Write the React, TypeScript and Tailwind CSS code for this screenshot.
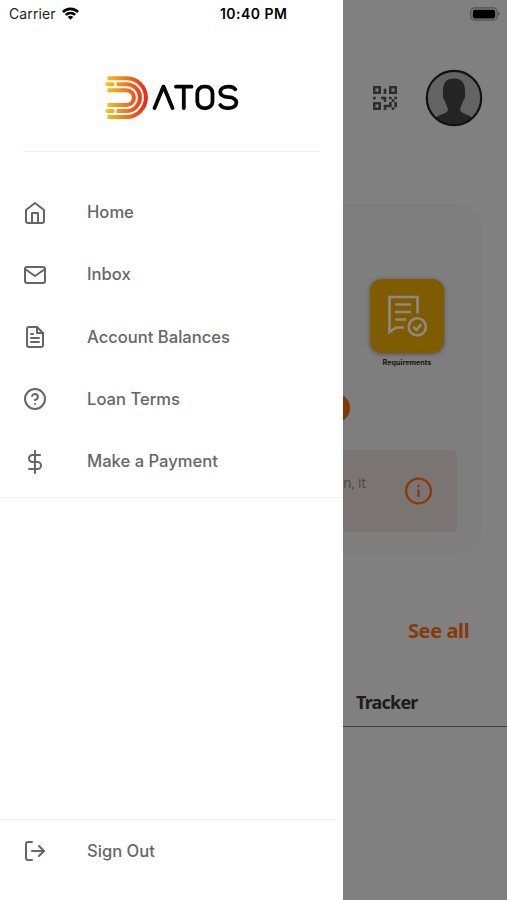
import type { IconType } from "react-icons";
import { FiDollarSign, FiFileText, FiHelpCircle, FiHome, FiLogOut, FiMail } from "react-icons/fi";

interface MenuItemProps {
  label: string;
  icon: IconType;
}

const menuItems: MenuItemProps[] = [
  { label: "Home", icon: FiHome },
  { label: "Inbox", icon: FiMail },
  { label: "Account Balances", icon: FiFileText },
  { label: "Loan Terms", icon: FiHelpCircle },
  { label: "Make a Payment", icon: FiDollarSign },
];

const MenuItem = ({ label, icon: Icon }: MenuItemProps) => (
  <a className="flex h-[62.3px] items-center pl-[23px] text-[#666]">
    <Icon className="size-6" strokeWidth={2} />
    <span className="ml-10 whitespace-nowrap text-[16.6px] font-medium">{label}</span>
  </a>
);

const Logo = () => (
  <svg className="h-[46px] w-[138px]" viewBox="103.5 74 138 46" fill="none">
    <defs>
      <linearGradient id="flame" x1="106" y1="0" x2="148" y2="0" gradientUnits="userSpaceOnUse">
        <stop offset="0" stopColor="#f2c81b" />
        <stop offset="0.5" stopColor="#ef7620" />
        <stop offset="1" stopColor="#e82618" />
      </linearGradient>
    </defs>
    <g stroke="url(#flame)" strokeWidth="4">
      <path d="M108 78.2H127A19.4 19.4 0 0 1 127 117H108" />
      <path d="M117 84.2H127A13.4 13.4 0 0 1 127 111H117" />
      <path d="M108 90.2H127A7.4 7.4 0 0 1 127 105H108" />
      <path d="M107.8 84.2H113M107.8 111H113" strokeLinecap="round" />
    </g>
    <g stroke="#050505" strokeWidth="3.8" strokeLinecap="round" strokeLinejoin="round">
      <path d="M155 108.1L163.8 86.7H164.2L173 108.1" />
      <path d="M176.5 86.7H192M184.3 87V108.1" />
      <rect x="197.8" y="86.7" width="15.2" height="21.4" rx="6.5" />
      <path d="M235.8 89.3C234.5 87.5 232 86.7 229 86.7C218 86.7 218 97.2 228.8 97.2C239.8 97.2 239.4 108.1 228.6 108.1C225 108.1 222.3 107.2 220.8 105" />
    </g>
  </svg>
);

const WifiIcon = () => (
  <svg className="ml-[5px] h-[15px] w-[19px]" viewBox="0 0 19 15">
    <path d="M1 5A12 12 0 0 1 18 5L16.2 6.9A9.5 9.5 0 0 0 2.8 6.9Z" />
    <path d="M3.9 8A8 8 0 0 1 15.1 8L13.3 9.8A5.5 5.5 0 0 0 5.7 9.8Z" />
    <path d="M6.8 10.9A4 4 0 0 1 12.2 10.9L9.5 13.7Z" />
  </svg>
);

const BatteryIcon = () => (
  <svg className="h-[14px] w-[30px]" viewBox="0 0 30 14">
    <rect x="0.8" y="0.8" width="26.4" height="12.4" rx="3.8" fill="none" stroke="#505050" strokeWidth="1.2" />
    <rect x="2.8" y="2.7" width="22.4" height="8.8" rx="2" />
    <path d="M28.3 5V9Q30 8 30 7T28.3 5" fill="#505050" />
  </svg>
);

const QrIcon = () => (
  <svg className="size-6" viewBox="0 0 24 24" fill="#2d2d2d">
    <path fillRule="evenodd" d="M0 0H8V8H0ZM2.5 2.5V5.5H5.5V2.5ZM16 0H24V8H16ZM18.5 2.5V5.5H21.5V2.5ZM0 16H8V24H0ZM2.5 18.5V21.5H5.5V18.5Z" />
    <path d="M10.7 2.7H13.3V8H10.7ZM0 10.7H2.7V13.3H0ZM8 10.7H13.3V16H10.7V13.3H8ZM16 10.7H18.7V13.3H16ZM21.3 10.7H24V13.3H21.3ZM18.7 13.3H21.3V16H18.7ZM16 16H18.7V21.3H13.3V24H10.7V18.7H16ZM21.3 16H24V21.3H21.3ZM18.7 21.3H21.3V24H18.7Z" />
  </svg>
);

const Avatar = () => (
  <svg className="size-[58px]" viewBox="0 0 58 58">
    <defs>
      <clipPath id="avatar-clip">
        <circle cx="29" cy="29" r="27" />
      </clipPath>
    </defs>
    <circle cx="29" cy="29" r="27.5" fill="#636363" />
    <path clipPath="url(#avatar-clip)" fill="#242424" d="M29 9.5C21 9.5 17.5 14.5 18 24C17.5 27 18.3 31 20 32C21 36 23 38 23 41C22 45 14 45 10 49.5V58H48V49.5C44 45 36 45 35 41C35 38 37 36 38 32C39.7 31 40.5 27 40 24C40.5 14.5 37 9.5 29 9.5Z" />
    <circle cx="29" cy="29" r="27.2" fill="none" stroke="#121212" strokeWidth="2.2" />
  </svg>
);

const RequirementsIcon = () => (
  <svg className="size-[74px]" viewBox="0 0 74 74" fill="none" stroke="#8c8985" strokeWidth="2.6">
    <path d="M34 48.5H26L19.5 53V18H47.5V34.5" />
    <path d="M25 25.5H41M25 33H41M25 40.5H36" />
    <circle cx="47.3" cy="47.8" r="8.6" />
    <path d="M43.2 47.8L46.3 50.8L51.3 45.3" />
  </svg>
);

const StatusBar = () => (
  <div className="absolute inset-x-0 top-0 flex h-[27px] items-center text-black">
    <span className="w-[52px] pl-[9px] text-[14px] tracking-[0.1px] text-[#222]">Carrier</span>
    <span className="pl-1"><WifiIcon /></span>
    <span className="ml-[140px] whitespace-nowrap text-[14px] font-semibold tracking-[0.45px]">10:40 PM</span>
    <span className="mr-[7px] ml-auto"><BatteryIcon /></span>
  </div>
);

const Drawer = () => (
  <aside className="flex w-[343px] shrink-0 flex-col bg-white">
    <div className="mx-[23px] flex h-[152px] items-end justify-center border-b border-[#f0f0f0] pb-[31px]">
      <Logo />
    </div>
    <nav className="mt-[29.4px] h-[316.6px] border-b border-[#f3f3f3]">
      {menuItems.map((item) => (
        <MenuItem key={item.label} {...item} />
      ))}
    </nav>
    <div className="mt-auto mr-[7px] h-[81px] border-t border-[#f3f3f3]">
      <MenuItem label="Sign Out" icon={FiLogOut} />
    </div>
  </aside>
);

// Part of the dashboard left visible beside the drawer, dimmed by its overlay
const Dashboard = () => (
  <main className="flex w-[164px] flex-col overflow-hidden bg-[#808080] pt-[69px]">
    <div className="flex h-[58px] items-center pl-[30px]">
      <QrIcon />
      <div className="ml-[28px]"><Avatar /></div>
    </div>

    <section className="mt-[77px] h-[349px] w-[140px] rounded-r-[28px] bg-[#7e7e7e] pt-[75px]">
      <div className="ml-[27px] w-[74px]">
        <div className="size-[74px] rounded-xl bg-[#805c00] shadow-[0_1px_4px_#505050]">
          <RequirementsIcon />
        </div>
        <p className="mt-[5px] text-center text-[7.2px] leading-[10px] font-bold text-[#181818]">Requirements</p>
      </div>
      <div className="mt-[25px] -ml-[23px] h-[30px] w-[30px] rounded-full bg-[#863600]" />
      <div className="mt-[27px] flex h-[82px] w-[114px] items-center rounded-r-md bg-[#7a7572]">
        <span className="-mt-[17px] w-[61px] whitespace-nowrap font-['Open_Sans',sans-serif] text-[14px] tracking-[-0.3px] text-[#484848]">n, it</span>
        <svg className="size-7" viewBox="0 0 28 28" fill="none" stroke="#873908" strokeWidth="2.3">
          <circle cx="14.5" cy="14" r="12.4" />
          <path d="M14.5 12.6V20M14.5 7.8V10.2" />
        </svg>
      </div>
    </section>

    <div className="mt-[62px] pl-[65px] font-['Noto_Sans',sans-serif] text-[20px] leading-8 font-bold tracking-[-0.4px] text-[#873908]">
      See all
    </div>
    <div className="mt-[37px] h-[43px] border-b border-[#404040] pl-[13px] font-['Noto_Sans',sans-serif] text-[18px] leading-[37px] font-bold tracking-[-0.8px] text-[#1c1c1c]">
      Tracker
    </div>
  </main>
);

export default function App() {
  return (
    <div className="relative flex h-[900px] w-[507px] overflow-hidden font-['Inter',sans-serif]">
      <Drawer />
      <Dashboard />
      <StatusBar />
    </div>
  );
}
